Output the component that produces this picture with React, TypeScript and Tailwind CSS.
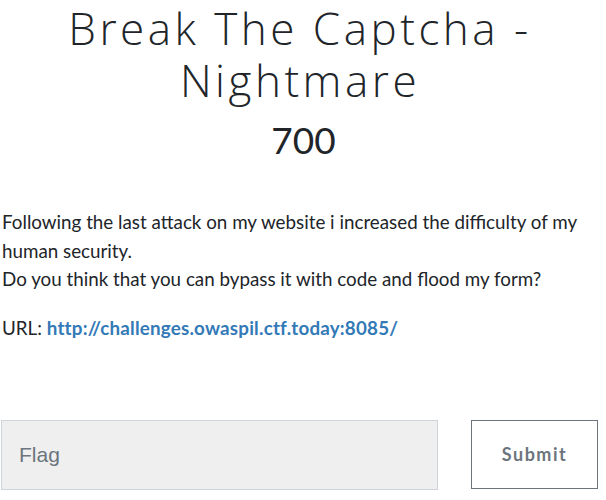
export default function App() {
  return (
    <div className="w-[606px] h-[500px] bg-white overflow-hidden pl-[1px] text-[#212529]" style={{ fontFamily: 'Lato, "Noto Sans", sans-serif' }}>
      <h2
        className="text-center text-[44px] leading-[52px] font-light tracking-[3.5px] pt-[2px] pr-[7px] text-[#212529]"
        style={{ fontFamily: '"Open Sans", Lato, sans-serif' }}
      >
        Break The Captcha -<br />Nightmare
      </h2>
      <h3 className="text-center text-[37px] leading-[44px] font-normal mt-[12px]">700</h3>
      <div className="mt-[46px] text-[18.8px] leading-[28.5px] pl-[1px]">
        <p>
          Following the last attack on my website i increased the difficulty of my human security.
          <br />
          Do you think that you can bypass it with code and flood my form?
        </p>
        <p className="mt-[20px]">
          URL: <a className="font-bold text-[#337ab7] tracking-[0.2px]">http://challenges.owaspil.ctf.today:8085/</a>
        </p>
      </div>
      <div className="mt-[78px] flex items-start">
        <input
          placeholder="Flag"
          className="w-[437px] h-[70px] bg-[#efefef] border border-[#ced4da] px-[17px] text-[21px] placeholder:text-[#6c757d] outline-none"
          style={{ fontFamily: '"Liberation Sans", Arial, sans-serif' }}
        />
        <button className="ml-[33px] w-[127px] h-[69px] border border-[#6c757d] bg-white text-[#6c757d] font-bold text-[18px] tracking-[1.5px]">
          Submit
        </button>
      </div>
    </div>
  );
}
